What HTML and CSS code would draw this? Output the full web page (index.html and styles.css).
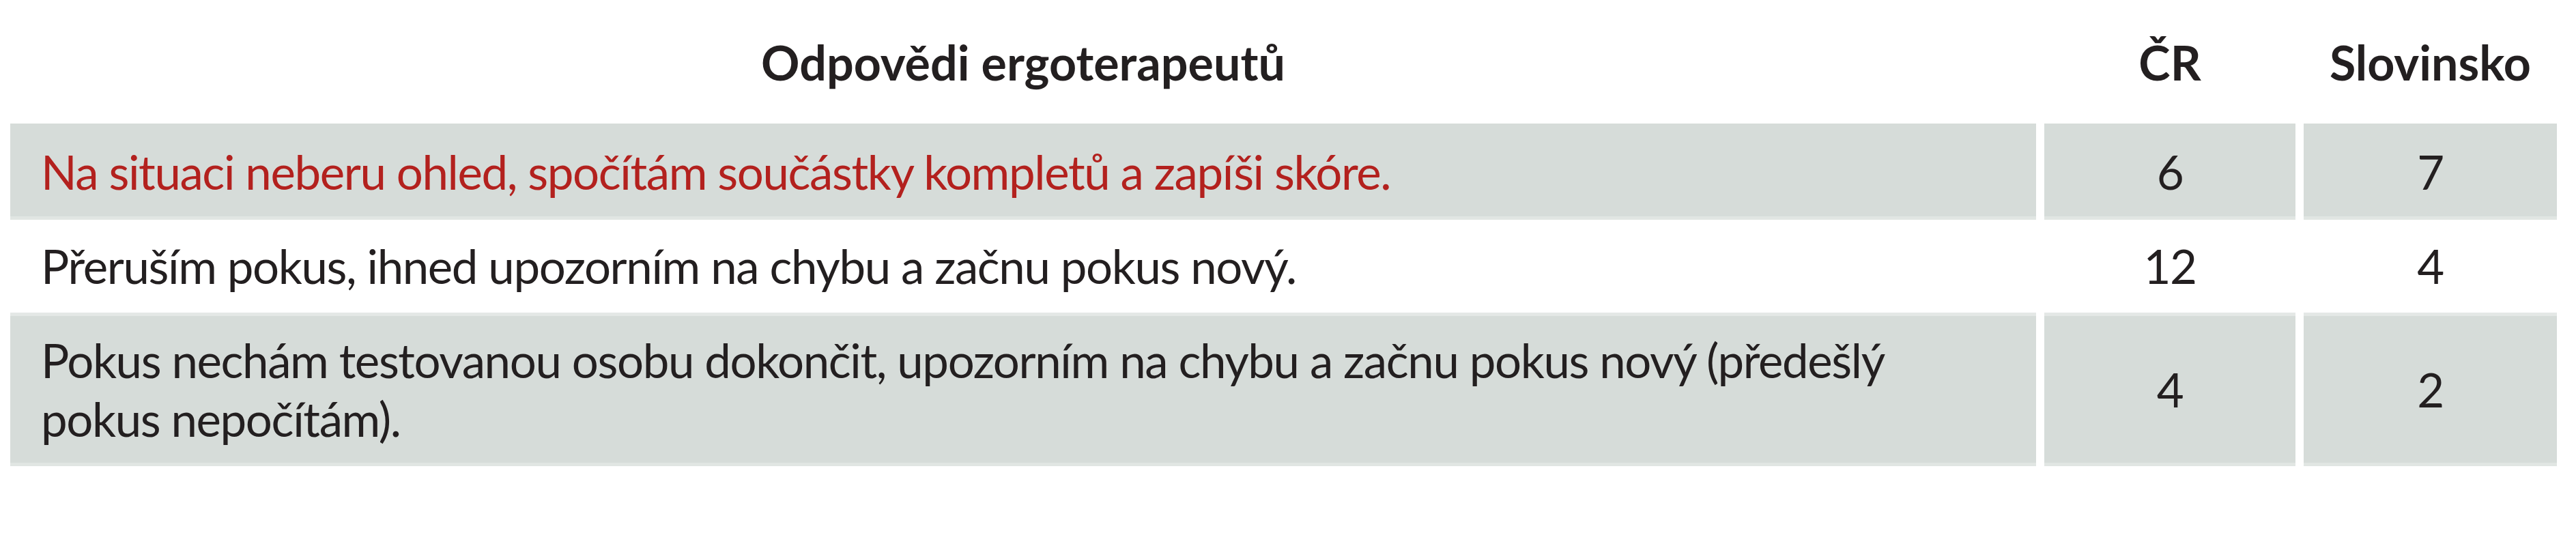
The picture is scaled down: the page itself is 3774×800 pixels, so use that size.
FILE: index.html
```html
<!DOCTYPE html>
<html lang="cs">
<head>
<meta charset="utf-8">
<title>Odpovědi ergoterapeutů</title>
<link rel="stylesheet" href="styles.css">
</head>
<body>
<table class="answers">
  <colgroup>
    <col class="col-text">
    <col class="col-num">
    <col class="col-num2">
  </colgroup>
  <thead>
    <tr class="head-row">
      <th class="head-text">Odpovědi ergoterapeutů</th>
      <th class="head-num">ČR</th>
      <th class="head-num">Slovinsko</th>
    </tr>
  </thead>
  <tbody>
    <tr class="row row-shaded row-one">
      <td class="cell-text highlight">Na situaci neberu ohled, spočítám součástky kompletů a zapíši skóre.</td>
      <td class="cell-num">6</td>
      <td class="cell-num">7</td>
    </tr>
    <tr class="row row-plain row-two">
      <td class="cell-text">Přeruším pokus, ihned upozorním na chybu a začnu pokus nový.</td>
      <td class="cell-num">12</td>
      <td class="cell-num">4</td>
    </tr>
    <tr class="row row-shaded row-three">
      <td class="cell-text">Pokus nechám testovanou osobu dokončit, upozorním na chybu a začnu pokus nový (předešlý pokus nepočítám).</td>
      <td class="cell-num">4</td>
      <td class="cell-num">2</td>
    </tr>
  </tbody>
</table>
</body>
</html>
```

FILE: styles.css
```css
html, body {
  margin: 0;
  padding: 0;
  background: #ffffff;
}

body {
  font-family: "Lato", "Open Sans", "Liberation Sans", sans-serif;
  color: #231f20;
  font-size: 70px;
  line-height: 86px;
}

.answers {
  margin-left: 3px;
  width: 3755px;
  border-collapse: separate;
  border-spacing: 12px 0;
  table-layout: fixed;
}

.col-text { width: 2968px; }
.col-num { width: 368px; }
.col-num2 { width: 371px; }

.head-row {
  height: 181px;
}

.head-row th {
  font-weight: 700;
  text-align: center;
  vertical-align: middle;
  padding: 0;
}

.row td {
  vertical-align: middle;
  padding: 0;
  font-size: 69px;
  letter-spacing: -1.4px;
}

.row-shaded td {
  background: #d6dcd9;
  box-shadow: inset 0 -5px 0 #e1e6e3;
}

.row-three td {
  box-shadow: inset 0 -5px 0 #e1e6e3, inset 0 5px 0 #e4e8e6;
}

.row-one { height: 141px; }
.row-two { height: 136px; }
.row-three { height: 225px; }

.cell-text {
  text-align: left;
  padding: 0 45px 0 45px !important;
}

.cell-num {
  text-align: center;
}

.highlight {
  color: #b3211e;
}
```
